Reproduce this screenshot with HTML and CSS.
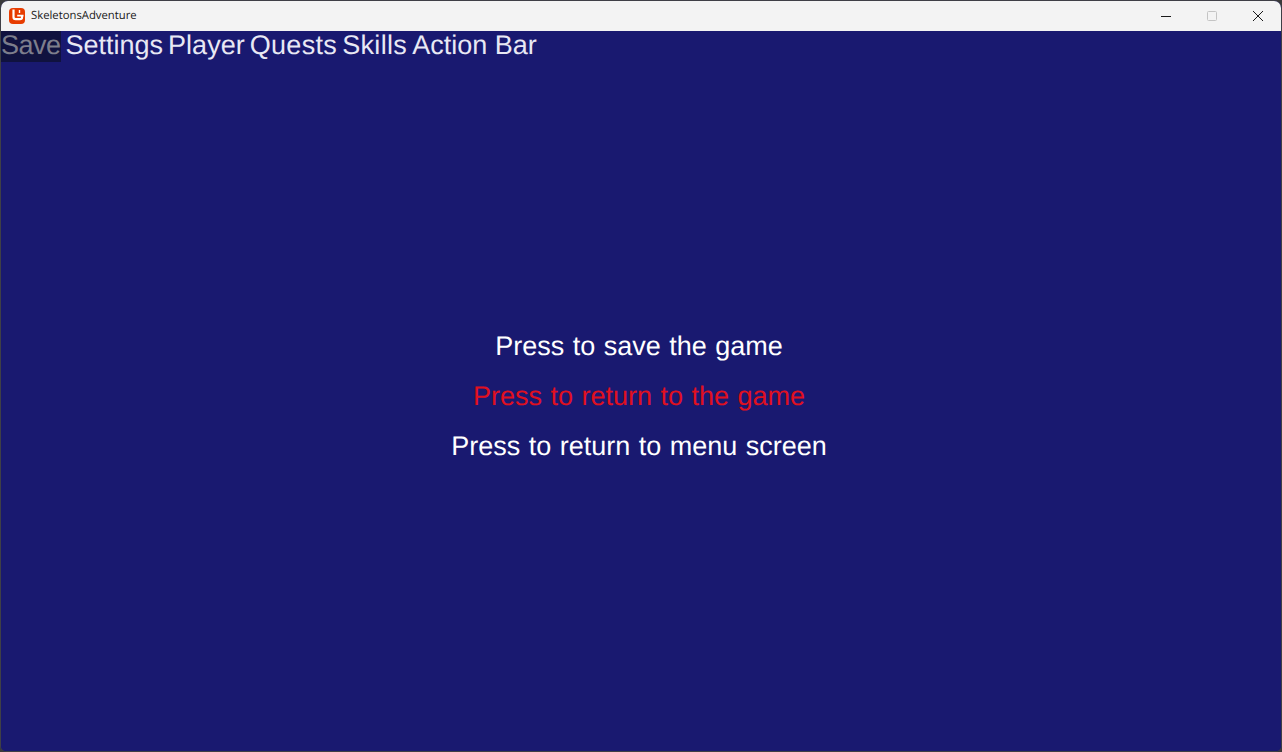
FILE: index.html
```html
<!DOCTYPE html>
<html lang="en">
<head>
    <meta charset="UTF-8">
    <title>SkeletonsAdventure</title>
    <link rel="stylesheet" href="styles.css">
</head>
<body>

<div class="window">
    <div class="titlebar">
        <svg class="app-icon" width="16" height="16" viewBox="0 0 16 16">
            <rect width="16" height="16" rx="4" fill="#e73c00"/>
            <path d="M4.5 1.5 V9 Q4.5 11.2 6.7 11.2 H11 Q13 11.2 13 9.5 V8" fill="none" stroke="#fff" stroke-width="2.2"/>
            <path d="M8.2 7.6 H14.5" fill="none" stroke="#fff" stroke-width="1.6"/>
            <path d="M10.5 2 V5" fill="none" stroke="#fff" stroke-width="1.4"/>
        </svg>
        <span class="app-title">SkeletonsAdventure</span>
        <div class="win-buttons">
            <svg class="win-btn" width="46" height="30" viewBox="0 0 46 30"><path d="M18 15.5 H28" stroke="#1a1a1a" stroke-width="1"/></svg>
            <svg class="win-btn" width="46" height="30" viewBox="0 0 46 30"><rect x="18.5" y="10.5" width="9" height="9" rx="1" fill="none" stroke="#c4c4c4" stroke-width="1"/></svg>
            <svg class="win-btn" width="46" height="30" viewBox="0 0 46 30"><path d="M18 10 L28 20 M28 10 L18 20" stroke="#1a1a1a" stroke-width="1"/></svg>
        </div>
    </div>
    <div class="game">
        <nav class="tabs">
            <span class="tab tab-active">Save</span>
            <span class="tab">Settings</span>
            <span class="tab">Player</span>
            <span class="tab tab-wide">Quests</span>
            <span class="tab tab-wide">Skills</span>
            <span class="tab">Action Bar</span>
        </nav>
        <div class="pause-menu">
            <div class="menu-item">Press to save the game</div>
            <div class="menu-item selected">Press to return to the game</div>
            <div class="menu-item">Press to return to menu screen</div>
        </div>
    </div>
</div>

</body>
</html>
```

FILE: styles.css
```css
html, body { margin: 0; height: 100%; background-color: #3a3a3a; overflow: hidden; }
body { font-family: "Liberation Sans", Arial, sans-serif; font-kerning: none; text-rendering: geometricPrecision; }

.window { width: 1282px; height: 752px; box-sizing: border-box; display: flex; flex-direction: column; border: 1px solid #3f3f46; border-radius: 8px 8px 6px 6px; overflow: hidden; background-color: #191970; }

.titlebar { height: 30px; flex-shrink: 0; display: flex; align-items: center; background-color: #f3f3f3; padding-left: 8px; }
.app-icon { flex-shrink: 0; }
.app-title { margin: -2px 0 0 6px; font-family: "Open Sans", sans-serif; font-kerning: normal; font-size: 11.3px; color: #1a1a1a; }
.win-buttons { margin-left: auto; display: flex; }

.game { flex: 1; display: flex; flex-direction: column; background-color: #191970; }

.tabs { display: flex; gap: 5px; height: 31px; }
.tab { font-size: 27px; line-height: 29px; padding-bottom: 1px; color: #e8e8f4; white-space: nowrap; }
.tab-active { color: #7d7e8c; background-color: #10123f; letter-spacing: -0.5px; }
.tab-wide { letter-spacing: 0.33px; }

.pause-menu { display: flex; flex-direction: column; align-items: center; gap: 20px; padding-top: 269px; padding-right: 4px; }
.menu-item { font-size: 27px; line-height: 30px; word-spacing: 1px; color: #fff; white-space: nowrap; }
.menu-item.selected { color: #e01020; }
```
